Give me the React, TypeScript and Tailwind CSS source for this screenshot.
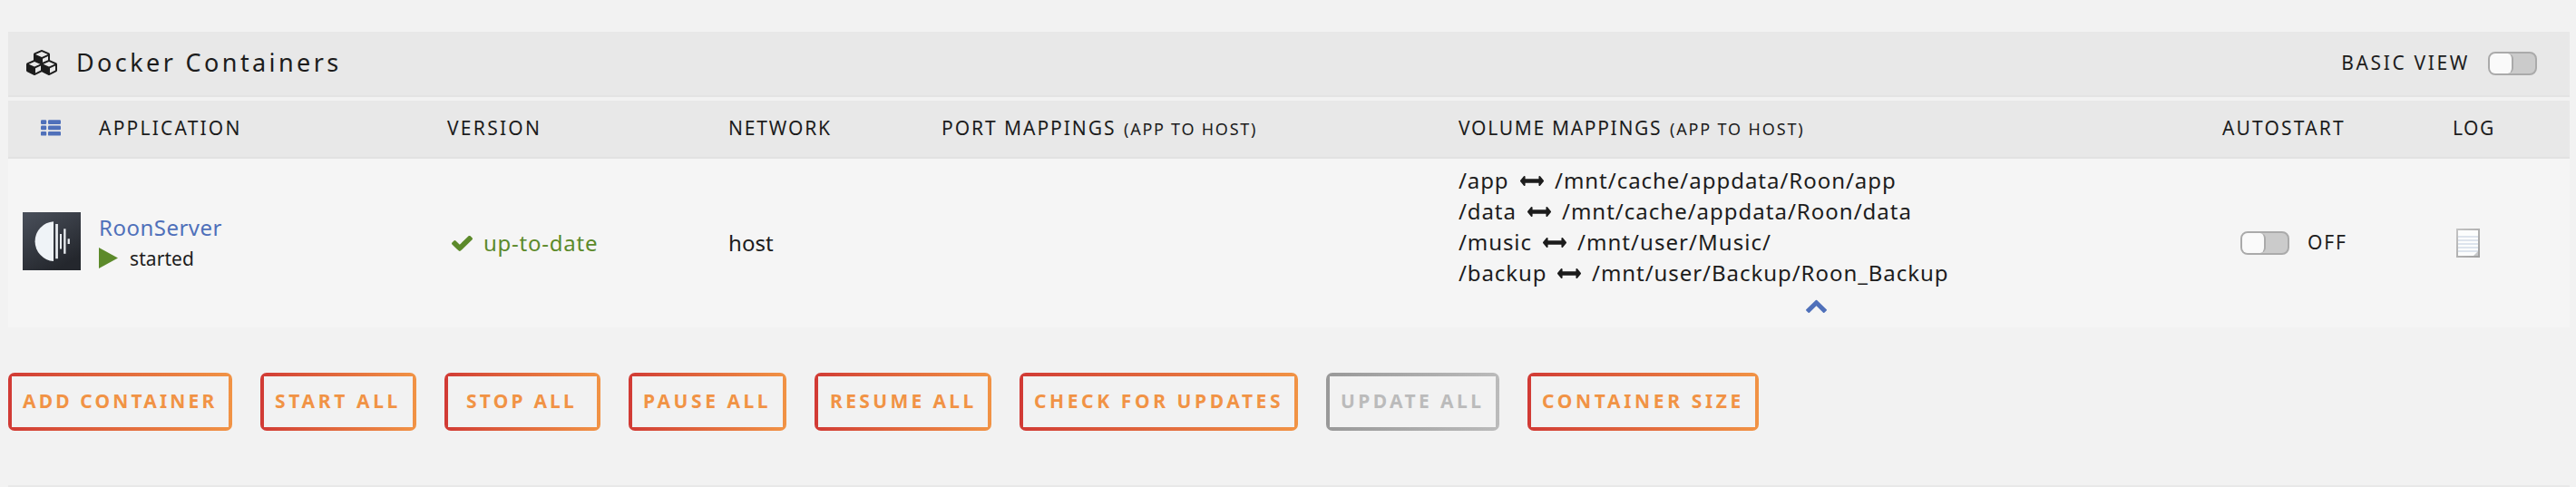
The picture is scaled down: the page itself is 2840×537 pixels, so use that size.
type IconProps = { className: string; viewBox: string; d: string };

function Icon({ className, viewBox, d }: IconProps) {
  return (
    <svg className={`${className} block shrink-0 fill-current`} viewBox={viewBox} preserveAspectRatio="none">
      <path d={d} />
    </svg>
  );
}

const CUBES =
  "M640 1632l384-192v-314l-384 164v342zM576 1178l404-173-404-173-404 173zM1664 1632l384-192v-314l-384 164v342zM1600 1178l404-173-404-173-404 173zM1152 885l384-165v-266l-384 164v267zM1088 506l441-189-441-189-441 189zM2176 1024v416q0 36-19 67t-52 47l-448 224q-25 14-57 14t-57-14l-448-224q-4-2-7-4-2 2-7 4l-448 224q-25 14-57 14t-57-14l-448-224q-33-16-52-47t-19-67v-416q0-38 21.500-70t56.500-48l434-186v-400q0-38 21.500-70t56.500-48l448-192q23-10 50-10t50 10l448 192q35 16 56.500 48t21.500 70v400l434 186q36 16 57 48t21 70z";
const CHECK =
  "M1671 566q0 40-28 68l-724 724-136 136q-28 28-68 28t-68-28l-136-136-362-362q-28-28-28-68t28-68l136-136q28-28 68-28t68 28l294 295 656-657q28-28 68-28t68 28l136 136q28 28 28 68z";
const ARROWS_H =
  "M1792 896q0 26-19 45l-256 256q-19 19-45 19t-45-19-19-45v-128h-1024v128q0 26-19 45t-45 19-45-19l-256-256q-19-19-19-45t19-45l256-256q19-19 45-19t45 19 19 45v128h1024v-128q0-26 19-45t45-19 45 19l256 256q19 19 19 45z";
const CHEVRON_UP =
  "M1683 1331l-166 165q-19 19-45 19t-45-19l-531-531-531 531q-19 19-45 19t-45-19l-166-165q-19-19-19-45.500t19-45.500l742-741q19-19 45-19t45 19l742 741q19 19 19 45.500t-19 45.500z";

function ListIcon() {
  return (
    <svg className="block h-[18px] w-[22px] fill-[#4f70ba]" viewBox="0 0 22 18">
      <rect x="0" y="0.3" width="6.2" height="4.7" rx="1.2" />
      <rect x="8" y="0.3" width="14" height="4.7" rx="1.2" />
      <rect x="0" y="6.6" width="6.2" height="4.7" rx="1.2" />
      <rect x="8" y="6.6" width="14" height="4.7" rx="1.2" />
      <rect x="0" y="12.9" width="6.2" height="4.7" rx="1.2" />
      <rect x="8" y="12.9" width="14" height="4.7" rx="1.2" />
    </svg>
  );
}

function RoonLogo() {
  return (
    <svg className="block size-16" viewBox="0 0 64 64">
      <defs>
        <linearGradient id="roon-bg" x1="0" y1="0" x2="0.55" y2="1">
          <stop offset="0" stopColor="#4a505b" />
          <stop offset="1" stopColor="#24272d" />
        </linearGradient>
      </defs>
      <rect width="64" height="64" fill="url(#roon-bg)" />
      <path d="M34 10.300A21.900 21.900 0 0 0 34 54z" fill="#eff3f7" />
      <g fill="#e9edf1">
        <rect x="36.200" y="13" width="2.700" height="38.200" />
        <rect x="41" y="24" width="2" height="16.500" />
        <rect x="45.200" y="18.300" width="2.300" height="27.500" />
        <rect x="49.600" y="29.300" width="2.300" height="5.700" />
      </g>
    </svg>
  );
}

function LogIcon() {
  return (
    <svg className="block h-8 w-[26px]" viewBox="0 0 26 32">
      <defs>
        <linearGradient id="log-edge" x1="0" y1="0" x2="1" y2="1">
          <stop offset="0" stopColor="#c4c4c4" />
          <stop offset="1" stopColor="#a0a0a0" />
        </linearGradient>
      </defs>
      <rect width="26" height="32" fill="url(#log-edge)" />
      <path d="M2 2H24V26L20 30H2z" fill="#fcfdfd" />
      <g fill="#dde4ed">
        <rect x="2" y="8" width="22" height="2" />
        <rect x="2" y="12" width="22" height="2" />
        <rect x="2" y="16" width="22" height="2" />
        <rect x="2" y="20" width="22" height="2" />
        <rect x="2" y="24" width="22" height="2" />
      </g>
      <path d="M24 25L19 30H24z" fill="#c6c8ca" />
    </svg>
  );
}

function Toggle() {
  return (
    <span className="flex h-[26px] w-[54px] shrink-0 overflow-hidden rounded-[8px] border-2 border-[#aaaaaa] bg-[#cbcbcb]">
      <span className="h-full w-[26px] rounded-r-[6px] border-r-2 border-[#aaaaaa] bg-[#fafafa]" />
    </span>
  );
}

const volumes = [
  { app: "/app", host: "/mnt/cache/appdata/Roon/app", width: "w-[68px]", spacing: "tracking-[0.97px]" },
  { app: "/data", host: "/mnt/cache/appdata/Roon/data", width: "w-[76px]", spacing: "tracking-[1px]" },
  { app: "/music", host: "/mnt/user/Music/", width: "w-[93px]", spacing: "tracking-[1.05px]" },
  { app: "/backup", host: "/mnt/user/Backup/Roon_Backup", width: "w-[109px]", spacing: "tracking-[0.95px]" },
];

const buttons = [
  { label: "ADD CONTAINER", size: "w-[247px] mr-[31px]", text: "pl-[12px] tracking-[3.15px]" },
  { label: "START ALL", size: "w-[172px] mr-[31px]", text: "pl-[12px] tracking-[3.65px]" },
  { label: "STOP ALL", size: "w-[172px] mr-[31px]", text: "pl-[20px] tracking-[3.2px]" },
  { label: "PAUSE ALL", size: "w-[174px] mr-[31px]", text: "pl-[12px] tracking-[3.55px]" },
  { label: "RESUME ALL", size: "w-[195px] mr-[31px]", text: "pl-[13px] tracking-[3.35px]" },
  { label: "CHECK FOR UPDATES", size: "w-[307px] mr-[31px]", text: "pl-[12px] tracking-[3.6px]" },
  { label: "UPDATE ALL", size: "w-[191px] mr-[31px]", text: "pl-[12px] tracking-[3.4px]", disabled: true },
  { label: "CONTAINER SIZE", size: "w-[255px]", text: "pl-[12px] tracking-[3.65px]" },
];

const columns = "grid grid-cols-[100px_384px_310px_235px_570px_842px_253px_130px]";

export default function App() {
  return (
    <div className="flex h-[537px] w-[2840px] flex-col overflow-hidden whitespace-nowrap bg-[#f2f2f2] pl-[9px] pr-[7px] pt-[35px] font-['Noto_Sans','Liberation_Sans',sans-serif] text-[24px] text-[#1c1c1c]">
      <header className="flex h-[72px] items-center border-b-2 border-[#e3e3e3] bg-[#e8e8e8] pl-5 pr-9">
        <Icon className="mt-[-3px] h-[28px] w-[34px]" viewBox="0 0 2176 1792" d={CUBES} />
        <h1 className="ml-[21px] mt-[-2px] text-[27px] leading-[34px] tracking-[3.4px]">Docker Containers</h1>
        <span className="ml-auto mt-[-2px] text-[21px] leading-[28px] tracking-[2.65px]">BASIC VIEW</span>
        <span className="ml-[20px]">
          <Toggle />
        </span>
      </header>

      <div className={`${columns} mt-1 h-16 items-center border-b-2 border-[#e2e2e2] bg-[#e8e8e8] pb-[2px] text-[21px] leading-[28px]`}>
        <span className="pl-9 text-[#4f70ba]">
          <ListIcon />
        </span>
        <span className="tracking-[2.21px]">APPLICATION</span>
        <span className="tracking-[2.27px]">VERSION</span>
        <span className="tracking-[1.82px]">NETWORK</span>
        <span className="flex items-baseline">
          <span className="w-[201px] tracking-[1.95px]">PORT MAPPINGS</span>
          <small className="text-[18px] tracking-[1.75px]">(APP TO HOST)</small>
        </span>
        <span className="flex items-baseline">
          <span className="w-[233px] tracking-[1.69px]">VOLUME MAPPINGS</span>
          <small className="text-[18px] tracking-[1.85px]">(APP TO HOST)</small>
        </span>
        <span className="tracking-[2.17px]">AUTOSTART</span>
        <span className="pl-px tracking-[1.51px]">LOG</span>
      </div>

      <div className={`${columns} h-[186px] items-center bg-[#f5f5f5]`}>
        <div className="pb-1 pl-4">
          <RoonLogo />
        </div>
        <div>
          <a className="block leading-[34px] tracking-[0.48px] text-[#4f70ba]">RoonServer</a>
          <div className="flex items-center">
            <svg className="mt-[-2px] block h-[23px] w-[21px] fill-[#5c8a2a]" viewBox="0 0 21 23">
              <path d="M0 0L21 11.500L0 23z" />
            </svg>
            <span className="ml-[13px] text-[21px] leading-[34px] tracking-[0.08px]">started</span>
          </div>
        </div>
        <div className="flex items-center pl-[5px] text-[#5c8a2a]">
          <Icon className="h-[17px] w-[23px]" viewBox="121 344 1550 1178" d={CHECK} />
          <span className="ml-[12px] leading-[34px] tracking-[0.76px]">up-to-date</span>
        </div>
        <span className="leading-[34px] tracking-[0.05px]">host</span>
        <span />
        <div className="flex flex-col self-start pt-[7px]">
          {volumes.map((v) => (
            <div key={v.app} className="flex h-[34px] items-center leading-[34px]">
              <span className={`${v.width} tracking-[0.9px]`}>{v.app}</span>
              <Icon className="mt-px h-[11px] w-[26px]" viewBox="0 576 1792 640" d={ARROWS_H} />
              <span className={`ml-[12px] ${v.spacing}`}>{v.host}</span>
            </div>
          ))}
          <Icon className="ml-[383px] mt-3 h-[15px] w-[23px] text-[#4f70ba]" viewBox="90 435 1612 1080" d={CHEVRON_UP} />
        </div>
        <div className="flex items-center pl-5">
          <Toggle />
          <span className="ml-[20px] mt-[-2px] text-[21px] leading-[28px] tracking-[1.85px]">OFF</span>
        </div>
        <div className="pl-[5px]">
          <LogIcon />
        </div>
      </div>

      <div className="mt-[50px] flex">
        {buttons.map((b) => (
          <button
            key={b.label}
            className={`flex h-16 rounded-[7px] px-1 py-1 text-[21px] font-bold leading-[28px] ${b.size} ${
              b.disabled
                ? "bg-linear-to-r from-[#999999] to-[#bbbbbb] text-[#bbbbbb]"
                : "bg-linear-to-r from-[#d13a35] to-[#f19345] text-[#f19345]"
            }`}
          >
            <span className={`flex h-14 w-full items-center bg-[#f2f2f2] pb-[2px] ${b.text}`}>{b.label}</span>
          </button>
        ))}
      </div>
      <div className="mt-[60px] h-[2px] shrink-0 bg-[#e8e8e8]" />
    </div>
  );
}
